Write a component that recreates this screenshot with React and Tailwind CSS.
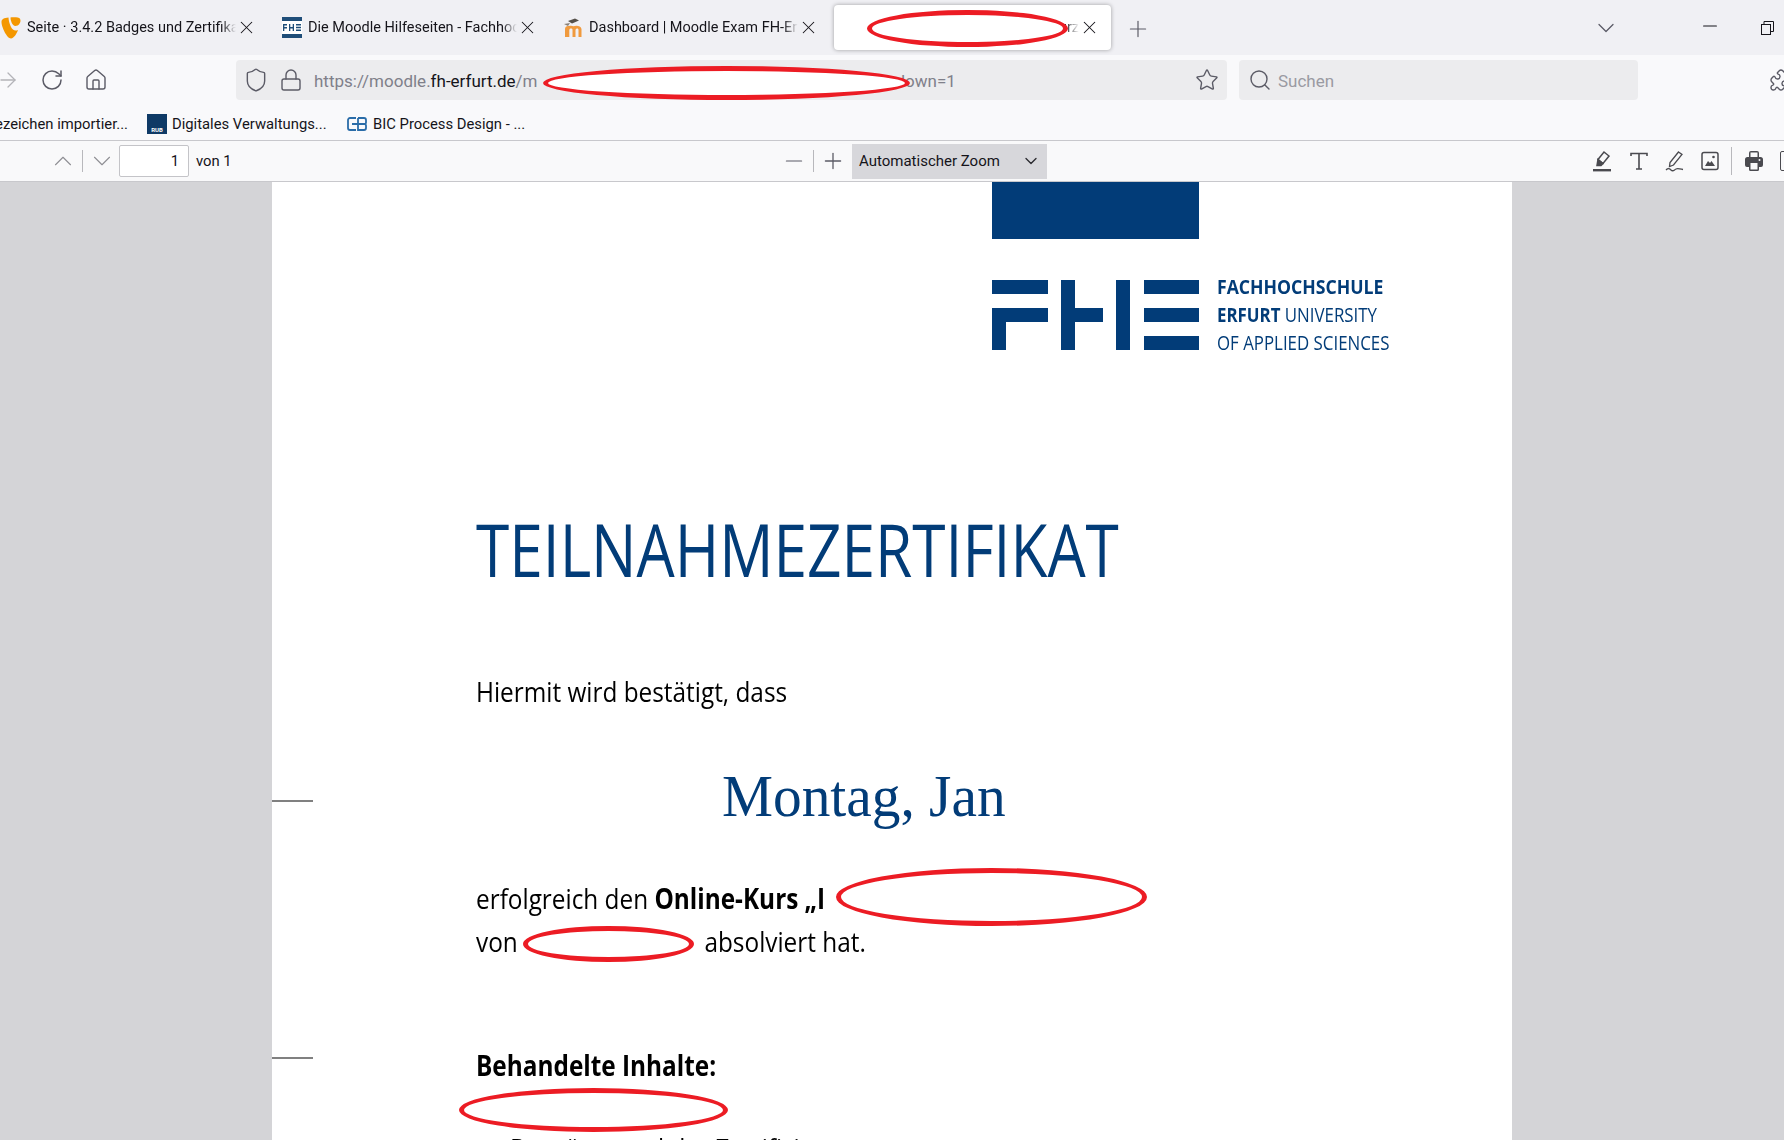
import React from "react";
import { RotateCw, House, Shield, Lock, Star, Search, Puzzle, ChevronDown, ChevronUp, X, Plus, Minus, ArrowRight } from "lucide-react";

const ink = "#5b5b66";

function Typo3() {
  return (
    <svg width="20" height="22" viewBox="0 0 20 22" className="shrink-0">
      <path d="M7.5 0.5 C3 1 0.5 2 0.5 5 C0.5 10 6 21.5 10 21.5 C13 21.5 16 16 17 13 C14 14.5 11.5 13 10 10 C8.5 7 7.5 3 7.5 0.5 Z" fill="#f49700" />
      <path d="M9.5 0.5 C9.5 3 11 9 14.5 9 C17.5 9 19.5 6 19.5 3.5 C19.5 1 17.5 0.3 15 0.3 C12.5 0.3 11 0.3 9.5 0.5 Z" fill="#f49700" />
    </svg>
  );
}

function FheFav() {
  return (
    <svg width="20" height="21" viewBox="0 0 20 21" className="shrink-0">
      <rect width="20" height="21" fill="#ffffff" />
      <rect width="20" height="4" fill="#1f4e79" />
      <rect y="17" width="20" height="4" fill="#1f4e79" />
      <path d="M1 7h4v1.5H2.3V10H5v1.5H2.3V14H1zM7 7h1.3v3h2.4V7H12v7h-1.3v-2.5H8.3V14H7zM14 7h5v1.5h-5zM14 9.8h5v1.5h-5zM14 12.5h5V14h-5z" fill="#1f4e79" />
    </svg>
  );
}

function MoodleFav() {
  return (
    <svg width="20" height="20" viewBox="0 0 20 20" className="shrink-0">
      <path d="M5 3 L12 0.5 L16 2.5 L9 5.5 Z" fill="#55504a" />
      <path d="M1 6 L7 5 L5 8 Z" fill="#8a8178" />
      <path d="M2 19 V11 C2 8.5 4 7.5 6 8 C7.5 7.5 9 7.5 10.5 8.3 C12.5 7.2 18 7.2 18.5 11 V19 H15.5 V12 C15.500 10 13 10 12.500 12 V19 H9.500 V12 C9.500 10.300 6.800 10 6.300 12 V19 Z" fill="#f09a3e" />
    </svg>
  );
}

function Tab({ icon, title, active }) {
  return (
    <div className={active
      ? "flex items-center shrink-0 h-[45px] w-[277px] mx-[2px] pl-[10px] pr-[11px] rounded-[4px] bg-white shadow-[0_0_4px_rgba(0,0,0,0.35)]"
      : "flex items-center shrink-0 h-[45px] w-[277px] mx-[2px] pl-[10px] pr-[11px]"}>
      <div className="w-5 mr-[6px] shrink-0 flex items-center justify-center">{icon}</div>
      <div className="flex-1 overflow-hidden whitespace-nowrap text-[14.5px] leading-[20px] text-[#15141a] [mask-image:linear-gradient(to_right,black_93%,transparent)] pt-[1px]">
        {title}
      </div>
      <X size={21} strokeWidth={1.2} color="#15141a" className="shrink-0" />
    </div>
  );
}

function Ellipse({ className }) {
  return <div className={"absolute rounded-[50%] border-[5px] border-[#ec1c24] bg-white " + className} />;
}

export default function App() {
  return (
    <div className="relative w-[1784px] h-[1140px] overflow-hidden bg-[#d4d4d7] font-['Roboto',sans-serif] text-[#15141a]">
      {/* tab strip */}
      <div className="flex items-start h-[55px] pt-[5px] bg-[#f0f0f4] pr-[10px]">
        <div className="flex -ml-[11px] shrink-0">
          <Tab icon={<Typo3 />} title="Seite · 3.4.2 Badges und Zertifikate" />
          <Tab icon={<FheFav />} title="Die Moodle Hilfeseiten - Fachhochschule" />
          <Tab icon={<MoodleFav />} title="Dashboard | Moodle Exam FH-Erfurt" />
          <Tab active icon={null} title={<span className="block text-right">Zertifikat_Kurz</span>} />
        </div>
        <Plus size={26} strokeWidth={1.1} color={ink} className="ml-[12px] mt-[11px] shrink-0" />
        <ChevronDown size={28} strokeWidth={1.1} color={ink} className="ml-auto mt-[9px] shrink-0" />
        <Minus size={22} strokeWidth={1.2} color="#15141a" className="ml-[79px] mt-[10px] shrink-0" />
        <svg width="13" height="14" viewBox="0 0 13 14" className="ml-[40px] mt-[16px] shrink-0" fill="none" stroke="#15141a" strokeWidth="1">
          <rect x="0.5" y="3.5" width="9" height="10" />
          <path d="M3 3.5V0.5H12.5V10.500H9.500" />
        </svg>
      </div>

      {/* navigation row */}
      <div className="flex items-center h-[52px] pt-[5px] pb-[7px] bg-[#f9f9fb]">
        <ArrowRight size={24} strokeWidth={1.3} color="#b4b4b8" className="-ml-[4px] shrink-0" />
        <RotateCw size={24} strokeWidth={1.5} color={ink} className="ml-[20px] shrink-0" />
        <House size={24} strokeWidth={1.4} color={ink} className="ml-[20px] shrink-0" />
        <div className="flex items-center shrink-0 ml-[128px] w-[991px] h-[40px] rounded-[4px] bg-[#ececee] pl-[7px] pr-[8px]">
          <Shield size={26} strokeWidth={1.3} color={ink} className="shrink-0" />
          <Lock size={24} strokeWidth={1.4} color={ink} className="ml-[10px] shrink-0" />
          <div className="ml-[11px] pt-[3px] text-[17px] whitespace-nowrap text-[#80808a]">
            https://moodle.<span className="text-[#15141a]">fh-erfurt.de</span>/m<span className="inline-block w-[358px]" />down=1
          </div>
          <Star size={24} strokeWidth={1.4} color={ink} className="ml-auto shrink-0" />
        </div>
        <div className="flex items-center shrink-0 ml-[12px] w-[399px] h-[40px] rounded-[4px] bg-[#ececee] pl-[9px]">
          <Search size={24} strokeWidth={1.4} color={ink} className="shrink-0" />
          <span className="ml-[6px] pt-[3px] text-[17px] text-[#9a9aa2]">Suchen</span>
        </div>
        <Puzzle size={24} strokeWidth={1.4} color={ink} className="ml-[131px] shrink-0" />
      </div>

      {/* bookmarks row */}
      <div className="flex items-center h-[33px] bg-[#f9f9fb] text-[14.8px] whitespace-nowrap pt-[1px]">
        <div className="flex justify-end w-[128px] overflow-hidden shrink-0 mr-[19px]"><span className="shrink-0">Lesezeichen importier...</span></div>
        <div className="w-5 h-5 shrink-0 flex items-end justify-center bg-[#0f3a66] text-[6px] leading-[9px] font-bold text-white">RUB</div>
        <span className="ml-[5px] w-[175px] shrink-0">Digitales Verwaltungs...</span>
        <svg width="20" height="14" viewBox="0 0 20 14" className="shrink-0" fill="none" stroke="#2a6ca8" strokeWidth="1.8">
          <path d="M9 1H3a2 2 0 0 0-2 2v8a2 2 0 0 0 2 2h6M11 1h6a2 2 0 0 1 2 2v2.500a1.500 1.500 0 0 1-1.500 1.500H11V1M11 7h6.500a1.500 1.500 0 0 1 1.500 1.500V11a2 2 0 0 1-2 2h-6zM5 7h6" />
        </svg>
        <span className="ml-[6px]">BIC Process Design - ...</span>
      </div>

      {/* pdf toolbar */}
      <div className="flex items-center h-[42px] border-y border-[#c8c8cc] bg-[#f9f9fa] text-[14.8px] whitespace-nowrap">
        <div className="flex items-center w-[781px] shrink-0 pl-[48px]">
          <ChevronUp size={30} strokeWidth={0.9} color="#8f8f94" className="shrink-0" />
          <div className="ml-[4px] w-px h-[22px] bg-[#b8b8bc] shrink-0" />
          <ChevronDown size={30} strokeWidth={0.9} color="#8f8f94" className="ml-[4px] shrink-0" />
          <div className="ml-[2px] w-[70px] h-[32px] shrink-0 rounded-[2px] border border-[#c4c4c8] bg-white flex items-center justify-end pr-[9px]">1</div>
          <span className="ml-[7px] pt-[1px]">von 1</span>
        </div>
        <Minus size={26} strokeWidth={1.1} color={ink} className="shrink-0" />
        <div className="ml-[6px] w-px h-[22px] bg-[#b8b8bc] shrink-0" />
        <Plus size={26} strokeWidth={1.2} color={ink} className="ml-[6px] shrink-0" />
        <div className="flex items-center shrink-0 ml-[6px] w-[195px] h-[35px] bg-[#d7d7db] pl-[7px] pr-[6px]">
          <span className="text-[15px]">Automatischer Zoom</span>
          <ChevronDown size={20} strokeWidth={1.6} color="#2b2b30" className="ml-auto shrink-0" />
        </div>
        <svg width="20" height="22" viewBox="0 0 20 22" className="ml-[545px] shrink-0" fill="none" stroke="#4a4a4f" strokeWidth="1.5">
          <path d="M12 2l5 4-6 7.500-5-4z" />
          <path d="M6 9.500l5 4-2 2H5z" fill="#4a4a4f" />
          <rect x="1" y="19" width="18" height="2.400" fill="#4a4a4f" stroke="none" />
        </svg>
        <svg width="20" height="20" viewBox="0 0 20 20" className="ml-[17px] shrink-0" fill="none" stroke="#4a4a4f" strokeWidth="1.6">
          <path d="M2 5V2.500H18V5M10 2.500V18M7 18H13" />
        </svg>
        <svg width="20" height="22" viewBox="0 0 20 22" className="ml-[16px] shrink-0" fill="none" stroke="#4a4a4f" strokeWidth="1.3">
          <path d="M13.500 2l3.500 2.500-8.500 10.500-4 1.500 .5-4z" />
          <path d="M1 20c2-2 3-2 5 0s3 0 5-1 3 0 7 .5" />
        </svg>
        <svg width="18" height="20" viewBox="0 0 18 20" className="ml-[16px] shrink-0">
          <rect x="1" y="1.500" width="16" height="17" rx="2" fill="none" stroke="#4a4a4f" strokeWidth="1.500" />
          <path d="M4 15l3-5 2 2 1.500-2 3.500 5z" fill="#4a4a4f" />
          <circle cx="12.500" cy="6" r="1.300" fill="#4a4a4f" />
        </svg>
        <div className="ml-[12px] w-px h-[28px] bg-[#b8b8bc] shrink-0" />
        <svg width="18" height="22" viewBox="0 0 18 22" className="ml-[13px] shrink-0">
          <path d="M4 7V3a2 2 0 0 1 2-2h6a2 2 0 0 1 2 2v4h1.500A2.500 2.500 0 0 1 18 9.500V15a2 2 0 0 1-2 2h-2v2.500A1.500 1.500 0 0 1 12.500 21h-7A1.500 1.500 0 0 1 4 19.500V17H2a2 2 0 0 1-2-2V9.500A2.500 2.500 0 0 1 2.500 7z" fill="#4a4a4f" />
          <rect x="5.500" y="2.500" width="7" height="4.500" fill="#f9f9fa" />
          <rect x="5.500" y="13" width="7" height="6.500" fill="#f9f9fa" />
          <circle cx="14.500" cy="10" r="1" fill="#f9f9fa" />
        </svg>
        <div className="ml-[17px] w-[18px] h-[20px] shrink-0 rounded-[2px] border-[1.5px] border-[#4a4a4f]" />
      </div>

      {/* pdf page */}
      <div className="relative mx-auto w-[1240px] h-[958px] overflow-hidden bg-white text-black font-['Open_Sans',sans-serif]">
        <div className="ml-[720px] w-[207px] h-[57px] bg-[#023c78]" />
        <div className="flex items-center ml-[720px] mt-[41px] h-[70px] text-[#023c78]">
          <svg width="207" height="70" viewBox="0 0 207 70" className="shrink-0" fill="#023c78">
            <path d="M0 0h56v14H0zM0 28h56v14H14v28H0zM69 0h14v28h28v14H83v28H69zM124 0h14v70h-14zM152 0h55v14h-55zM152 28h55v14h-55zM152 56h55v14h-55z" />
          </svg>
          <div className="ml-[18px] text-[19.6px] leading-[28px] whitespace-nowrap">
            <div className="font-bold origin-left scale-x-[0.9]">FACHHOCHSCHULE</div>
            <div className="origin-left scale-x-[0.86]"><span className="font-bold">ERFURT</span> UNIVERSITY</div>
            <div className="origin-left scale-x-[0.86]">OF APPLIED SCIENCES</div>
          </div>
        </div>
        <div className="ml-[204px] mt-[159px] text-[73.6px] leading-[80px] text-[#023c78] whitespace-nowrap origin-left scale-x-[0.82]">TEILNAHMEZERTIFIKAT</div>
        <div className="ml-[204px] mt-[82px] text-[28px] leading-[40px] whitespace-nowrap origin-left scale-x-[0.87]">Hiermit wird bestätigt, dass</div>
        <div className="ml-[450px] mt-[50px] text-[60px] leading-[70px] text-[#023c78] whitespace-nowrap font-['Liberation_Serif',serif] origin-left scale-x-[0.956]">Montag, Jan</div>
        <div className="ml-[204px] mt-[46px] text-[28px] leading-[43px] whitespace-nowrap origin-left scale-x-[0.87]">
          <div>erfolgreich den <span className="font-bold">Online-Kurs „I</span></div>
          <div>von <span className="inline-block w-[200px]" /> absolviert hat.</div>
        </div>
        <div className="ml-[204px] mt-[82px] text-[28px] leading-[40px] font-bold whitespace-nowrap origin-left scale-x-[0.87]">Behandelte Inhalte:</div>
        <div className="ml-[238px] mt-[43px] text-[28px] leading-[40px] whitespace-nowrap origin-left scale-x-[0.87]">Bausätze und der Zertifizierung</div>
        <div className="absolute left-0 top-[618px] w-[41px] h-[2px] bg-[#808080]" />
        <div className="absolute left-0 top-[875px] w-[41px] h-[2px] bg-[#808080]" />
      </div>

      {/* red redaction ellipses */}
      <Ellipse className="left-[867px] top-[10px] w-[201px] h-[37px]" />
      <Ellipse className="left-[543px] top-[66px] w-[367px] h-[34px]" />
      <Ellipse className="left-[836px] top-[868px] w-[311px] h-[58px]" />
      <Ellipse className="left-[523px] top-[926px] w-[171px] h-[36px]" />
      <Ellipse className="left-[459px] top-[1088px] w-[269px] h-[44px]" />
    </div>
  );
}
